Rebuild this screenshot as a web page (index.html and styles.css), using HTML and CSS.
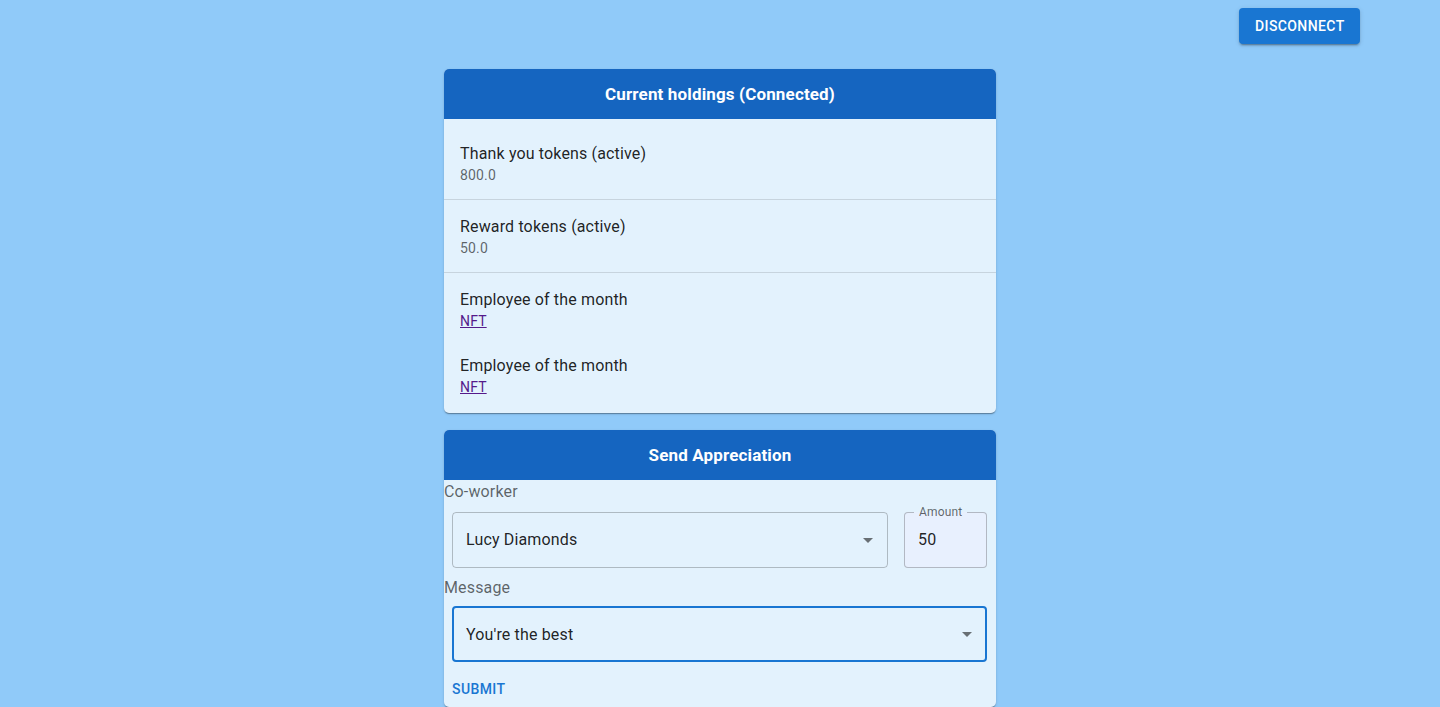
FILE: index.html
```html
<!DOCTYPE html>
<html>
<head>
<meta charset="utf-8">
<title>Appreciation</title>
<link rel="stylesheet" href="styles.css">
</head>
<body>
<div class="topbar">
  <button class="btn-contained">Disconnect</button>
</div>
<main class="main">
  <section class="card">
    <header class="card-header">Current holdings (Connected)</header>
    <ul class="list">
      <li class="item">
        <div class="primary">Thank you tokens (active)</div>
        <div class="secondary">800.0</div>
      </li>
      <li class="divider"></li>
      <li class="item">
        <div class="primary">Reward tokens (active)</div>
        <div class="secondary">50.0</div>
      </li>
      <li class="divider"></li>
      <li class="item item-nft">
        <div class="primary">Employee of the month</div>
        <div class="secondary"><a class="link" href="#">NFT</a></div>
      </li>
      <li class="item item-nft">
        <div class="primary">Employee of the month</div>
        <div class="secondary"><a class="link" href="#">NFT</a></div>
      </li>
    </ul>
  </section>

  <section class="card card-form">
    <header class="card-header">Send Appreciation</header>
    <div class="form">
      <div class="label">Co-worker</div>
      <div class="field-row">
        <div class="select">
          <span class="value">Lucy Diamonds</span>
          <svg class="arrow" viewBox="0 0 24 24" width="24" height="24"><path d="M7 10l5 5 5-5z"/></svg>
        </div>
        <div class="amount">
          <span class="amount-label">Amount</span>
          <span class="value">50</span>
        </div>
      </div>
      <div class="label">Message</div>
      <div class="select select-focused">
        <span class="value">You're the best</span>
        <svg class="arrow" viewBox="0 0 24 24" width="24" height="24"><path d="M7 10l5 5 5-5z"/></svg>
      </div>
      <div class="actions">
        <button class="btn-text">Submit</button>
      </div>
    </div>
  </section>
</main>
</body>
</html>
```

FILE: styles.css
```css
* { box-sizing: border-box; }

html, body {
  margin: 0;
  padding: 0;
  height: 100%;
  overflow: hidden;
}

body {
  background: #90caf9;
  font-family: Roboto, "Liberation Sans", Arial, sans-serif;
  color: rgba(0, 0, 0, 0.87);
}

.topbar {
  display: flex;
  justify-content: flex-end;
  padding: 8px 80px 0 0;
}

.btn-contained {
  height: 36px;
  width: 121px;
  padding: 6px 16px;
  border: 0;
  border-radius: 4px;
  background: #1976d2;
  color: #fff;
  font-family: Roboto, sans-serif;
  font-size: 14px;
  font-weight: 500;
  letter-spacing: 0.4px;
  text-transform: uppercase;
  box-shadow: 0 3px 1px -2px rgba(0,0,0,0.2), 0 2px 2px 0 rgba(0,0,0,0.14), 0 1px 5px 0 rgba(0,0,0,0.12);
}

.main {
  display: flex;
  flex-direction: column;
  align-items: center;
  gap: 17px;
  margin-top: 25px;
}

.card {
  width: 552px;
  background: #e3f2fd;
  border-radius: 5px;
  overflow: hidden;
  box-shadow: 0 2px 1px -1px rgba(0,0,0,0.2), 0 1px 1px 0 rgba(0,0,0,0.14), 0 1px 3px 0 rgba(0,0,0,0.12);
}

.card-header {
  height: 50px;
  display: flex;
  align-items: center;
  justify-content: center;
  background: #1565c0;
  color: #fff;
  font-size: 17px;
  font-weight: 700;
  letter-spacing: 0.15px;
}

.list {
  list-style: none;
  margin: 0;
  padding: 8px 0;
}

.item {
  padding: 15px 16px 14px;
}

.item-nft {
  padding-bottom: 8px;
}

.primary {
  font-size: 16px;
  line-height: 24px;
  letter-spacing: 0.15px;
}

.secondary {
  margin-top: -1px;
  font-size: 14px;
  line-height: 20px;
  letter-spacing: 0.15px;
  color: rgba(0, 0, 0, 0.6);
}

.link {
  color: #551a8b;
  text-decoration: underline;
}

.divider {
  height: 1px;
  background: rgba(0, 0, 0, 0.12);
}

.form {
  display: flex;
  flex-direction: column;
  padding-right: 9px;
}

.label {
  font-size: 16px;
  line-height: 24px;
  letter-spacing: 0.15px;
  color: rgba(0, 0, 0, 0.6);
}

.field-row {
  display: flex;
  gap: 16px;
  margin: 8px 0 8px 8px;
}

.select {
  position: relative;
  flex: 1;
  height: 56px;
  display: flex;
  align-items: center;
  padding: 0 13px 1px;
  border: 1px solid rgba(0, 0, 0, 0.23);
  border-radius: 4px;
  font-size: 16px;
  letter-spacing: 0.15px;
}

.select-focused {
  flex: none;
  margin: 6px 0 8px 8px;
  border: 2px solid #1976d2;
  padding: 1px 12px 0;
}

.arrow {
  position: absolute;
  right: 7px;
  top: 50%;
  margin-top: -12px;
  fill: rgba(0, 0, 0, 0.54);
}

.select-focused .arrow {
  right: 6px;
}

.amount {
  position: relative;
  width: 83px;
  height: 56px;
  display: flex;
  align-items: center;
  padding: 0 13px 1px;
  border: 1px solid rgba(0, 0, 0, 0.23);
  border-radius: 4px;
  background: #e8f0fe;
  font-size: 16px;
  letter-spacing: 0.15px;
}

.amount-label {
  position: absolute;
  top: -8px;
  left: 9px;
  padding: 0 5px;
  font-size: 12px;
  line-height: 14px;
  letter-spacing: 0.15px;
  color: rgba(0, 0, 0, 0.6);
  background: linear-gradient(#e3f2fd 0 50%, #e8f0fe 50% 100%);
}

.actions {
  display: flex;
  padding-top: 1px;
}

.btn-text {
  height: 36px;
  padding: 6px 8px;
  border: 0;
  background: transparent;
  color: #1976d2;
  font-family: Roboto, sans-serif;
  font-size: 14px;
  font-weight: 500;
  letter-spacing: 0.4px;
  text-transform: uppercase;
}
```
